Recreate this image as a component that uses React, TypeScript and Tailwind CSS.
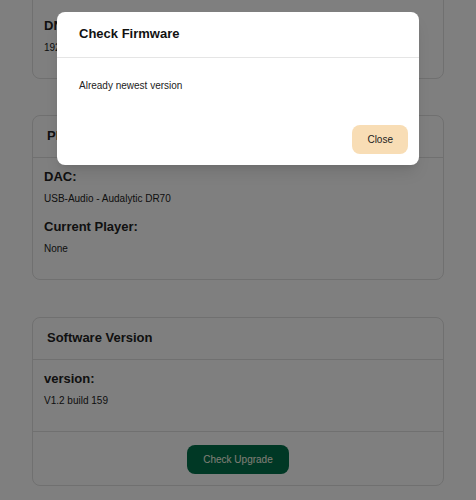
import React from "react";

type Item = { label: string; value: string };

function Card({
  title,
  items,
  footer,
  className = "mb-[37px]",
  bodyTop = "pt-[11px]",
}: {
  title?: string;
  items: Item[];
  footer?: React.ReactNode;
  className?: string;
  bodyTop?: string;
}) {
  return (
    <div className={`mx-8 rounded-lg border border-[#e0e0e0] bg-white ${className}`}>
      {title && (
        <div className="border-b border-[#e0e0e0] px-[14px] pb-[13px] pt-3">
          <h3 className="text-[13px] font-bold leading-4 text-[#222]">{title}</h3>
        </div>
      )}
      <div className={`px-[11px] pb-[10px] ${bodyTop}`}>
        {items.map((item) => (
          <div key={item.label}>
            <h4 className="text-[13px] font-bold leading-4 text-[#222]">{item.label}</h4>
            <p className="mb-[14px] mt-2 text-[10px] leading-3 text-[#222]">{item.value}</p>
          </div>
        ))}
      </div>
      {footer && (
        <div className="flex justify-center border-t border-[#e0e0e0] pb-[11px] pt-[13px]">
          {footer}
        </div>
      )}
    </div>
  );
}

export default function App() {
  return (
    <div
      className="relative h-[500px] w-[476px] overflow-hidden bg-white"
      style={{ fontFamily: '"Liberation Sans", Arial, sans-serif' }}
    >
      {/* page, scrolled down: the first card's top is above the view */}
      <div className="-mt-[40px]">
        <Card
          className="mb-[36px]"
          bodyTop="pt-[57px]"
          items={[{ label: "DNS:", value: "192.168.1.1" }]}
        />
        <Card
          title="Player Info"
          items={[
            { label: "DAC:", value: "USB-Audio - Audalytic DR70" },
            { label: "Current Player:", value: "None" },
          ]}
        />
        <Card
          title="Software Version"
          items={[{ label: "version:", value: "V1.2 build 159" }]}
          footer={
            <button className="h-[29px] rounded-lg bg-[#00704a] px-4 text-[10px] text-[#fffbea]">
              Check Upgrade
            </button>
          }
        />
      </div>

      {/* modal overlay */}
      <div className="absolute inset-0 bg-black/50">
        <div className="mx-auto mt-3 w-[362px] rounded-lg bg-white shadow-lg">
          <div className="border-b border-[#e5e5e5] px-[22px] pb-[15px] pt-[14px]">
            <h2 className="text-[13px] font-bold leading-4 text-[#111]">Check Firmware</h2>
          </div>
          <div className="p-[22px]">
            <p className="text-[10px] leading-3 text-[#222]">Already newest version</p>
          </div>
          <div className="flex justify-end p-[11px]">
            <button className="h-[29px] rounded-lg bg-[#f8ddb5] px-[15px] text-[10px] text-[#222]">
              Close
            </button>
          </div>
        </div>
      </div>
    </div>
  );
}
